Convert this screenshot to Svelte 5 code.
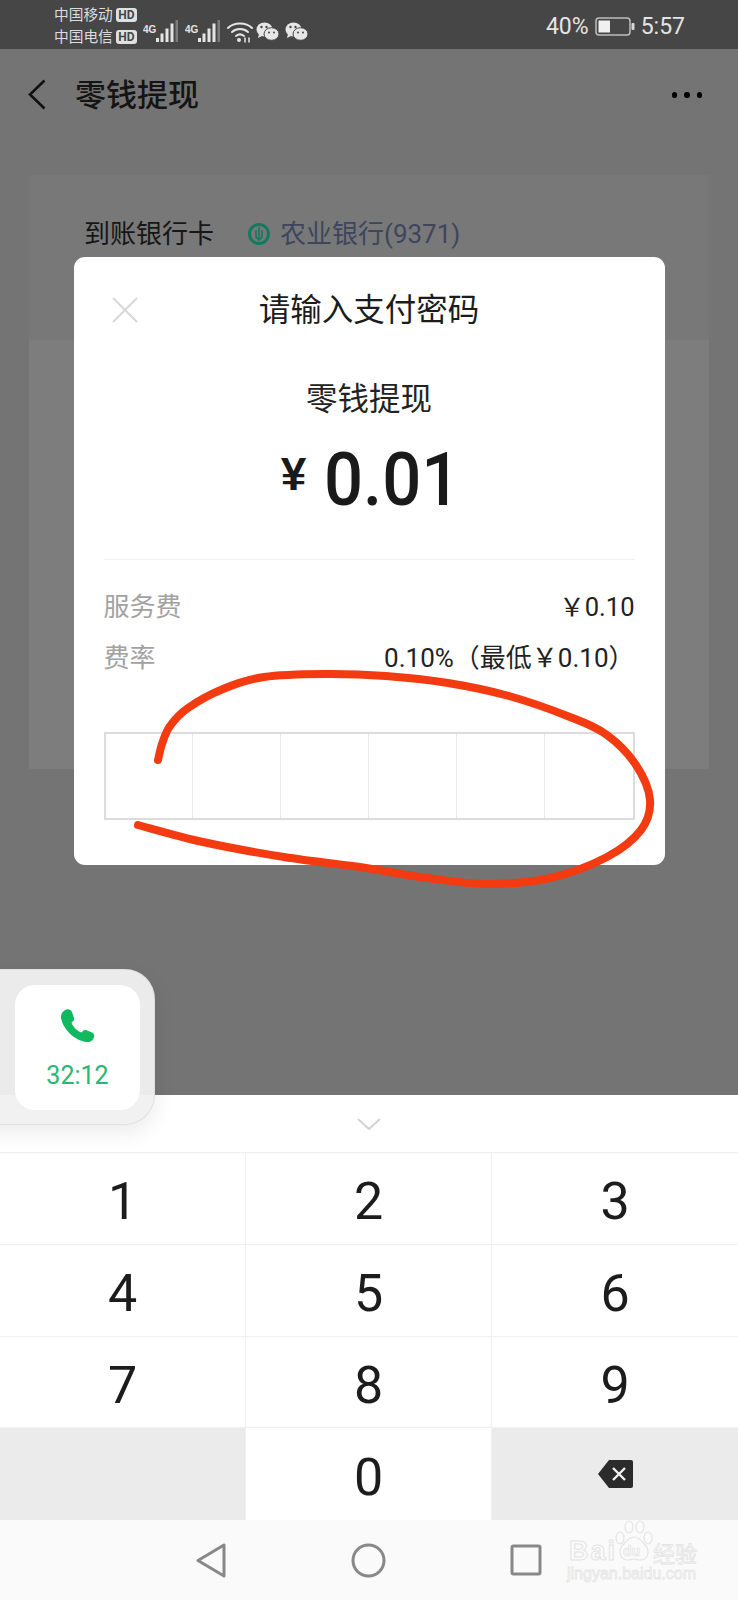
<script>
  const cells = [0, 1, 2, 3, 4, 5]
  const keys = ['1', '2', '3', '4', '5', '6', '7', '8', '9']

  // red marker stroke drawn over the screenshot
  const pts = [
    [158, 760], [162, 744], [170, 726], [188, 708], [223, 689], [264, 677], [325, 674], [386, 676], [448, 683],
    [509, 696], [570, 717], [607, 735], [636, 765], [650, 800], [641, 830], [607, 857], [550, 878],
    [488, 884], [427, 878], [366, 868], [284, 857], [203, 842], [138, 825]
  ]

  function smooth(p) {
    let d = `M${p[0][0]} ${p[0][1]}`
    for (let i = 0; i < p.length - 1; i++) {
      const a = p[i - 1] || p[i]
      const b = p[i]
      const c = p[i + 1]
      const e = p[i + 2] || c
      const c1 = [b[0] + (c[0] - a[0]) / 6, b[1] + (c[1] - a[1]) / 6]
      const c2 = [c[0] - (e[0] - b[0]) / 6, c[1] - (e[1] - b[1]) / 6]
      d += `C${c1[0]} ${c1[1]} ${c2[0]} ${c2[1]} ${c[0]} ${c[1]}`
    }
    return d
  }
  const marker = smooth(pts)
</script>

{#snippet signal()}
  <svg class="signal" width="36" height="24" viewBox="0 0 36 24">
    <text x="0" y="14" class="net">4G</text>
    <rect x="13" y="19" width="3" height="4" fill="#e4e4e4" />
    <rect x="17.5" y="14.5" width="3" height="8.5" fill="#e4e4e4" />
    <rect x="22.5" y="9.5" width="3" height="13.5" fill="#e4e4e4" />
    <rect x="27.5" y="4.500" width="3" height="18.5" fill="#e4e4e4" />
    <rect x="32.500" y="1" width="2.500" height="22" fill="#7c7c7c" />
  </svg>
{/snippet}

{#snippet wechat()}
  <svg width="23" height="19" viewBox="0 0 23 19">
    <ellipse cx="8.500" cy="7.500" rx="8" ry="7" fill="#e6e6e6" />
    <path d="M3 12l-1 4 4-2z" fill="#e6e6e6" />
    <ellipse cx="15.500" cy="12" rx="7.500" ry="6.300" fill="#e6e6e6" stroke="#464646" stroke-width="1" />
    <circle cx="5.500" cy="5" r="1.200" fill="#464646" />
    <circle cx="10.500" cy="5" r="1.200" fill="#464646" />
    <circle cx="13" cy="10.500" r="1" fill="#464646" />
    <circle cx="18" cy="10.500" r="1" fill="#464646" />
  </svg>
{/snippet}

<div class="phone">
  <div class="status">
    <div class="carriers">
      <div class="carrier">中国移动<span class="hd">HD</span></div>
      <div class="carrier">中国电信<span class="hd">HD</span></div>
    </div>
    <div class="status-icons">
      {@render signal()}
      {@render signal()}
      <svg class="wifi" width="26" height="22" viewBox="0 0 26 22" fill="none" stroke="#e6e6e6" stroke-width="2" stroke-linecap="round">
        <path d="M1 7C7 1 19 1 25 7" />
        <path d="M5 11C9.500 7 16.500 7 21 11" />
        <path d="M9 15C11.500 13 14.500 13 17 15" />
        <circle cx="12" cy="19" r="2" fill="#e6e6e6" stroke="none" />
        <path d="M18 17v4M22 17v4" stroke-width="1.500" />
      </svg>
      <span class="chat">{@render wechat()}{@render wechat()}</span>
    </div>
    <div class="status-right">
      <span>40%</span>
      <svg width="40" height="20" viewBox="0 0 40 20">
        <rect x="1" y="1" width="34" height="17" rx="3" fill="none" stroke="#bdbdbd" stroke-width="1.500" />
        <rect x="3.500" y="3.500" width="11.500" height="12" fill="#f0f0f0" />
        <rect x="36.500" y="6" width="3" height="7" rx="1" fill="#d8d8d8" />
      </svg>
      <span>5:57</span>
    </div>
  </div>

  <div class="header">
    <svg class="back" width="18" height="31" viewBox="0 0 18 31" fill="none" stroke="#111" stroke-width="2.600">
      <path d="M16.500 1.500L2 15.500l14.500 14" />
    </svg>
    <div class="page-title">零钱提现</div>
    <div class="dots"><i></i><i></i><i></i></div>
  </div>

  <div class="page">
    <div class="card bank">
      <span class="bank-label">到账银行卡</span>
      <svg class="bank-logo" width="24" height="24" viewBox="0 0 24 24" fill="none" stroke="#137a5e">
        <circle cx="12" cy="12" r="9.500" stroke-width="3" />
        <path d="M12 5v14M9 8v6c0 2 1.500 3 3 3s3-1 3-3V8" stroke-width="1.600" />
      </svg>
      <span class="bank-name">农业银行(9371)</span>
    </div>
    <div class="card amount-card"></div>
  </div>

  <div class="keyboard">
    <div class="handle">
      <svg width="24" height="12" viewBox="0 0 24 12" fill="none" stroke="#d2d2d2" stroke-width="2">
        <path d="M1 1l11 10L23 1" />
      </svg>
    </div>
    <div class="keys">
      {#each keys as k}
        <div class="key">{k}</div>
      {/each}
      <div class="key dim"></div>
      <div class="key">0</div>
      <div class="key dim">
        <svg width="37" height="30" viewBox="0 0 37 30">
          <path d="M12 1h22a2 2 0 0 1 2 2v24a2 2 0 0 1-2 2H12L1 15z" fill="#2b2b2b" />
          <path d="M16 9l12 12M28 9L16 21" stroke="#f2f2f2" stroke-width="2.400" />
        </svg>
      </div>
    </div>
    <div class="nav">
      <svg class="nav-back" width="30" height="35" viewBox="0 0 30 35" fill="none" stroke="#888" stroke-width="3" stroke-linejoin="round">
        <path d="M28 2v31L2 17.500z" />
      </svg>
      <svg class="nav-home" width="35" height="35" viewBox="0 0 35 35" fill="none" stroke="#888" stroke-width="3">
        <circle cx="17.500" cy="17.500" r="15.500" />
      </svg>
      <svg class="nav-recent" width="32" height="32" viewBox="0 0 32 32" fill="none" stroke="#888" stroke-width="3" stroke-linejoin="round">
        <rect x="2" y="2" width="28" height="28" rx="1.500" />
      </svg>
    </div>
  </div>

  <div class="watermark">
    <span class="wm-bai">Bai</span>
    <svg class="wm-paw" width="38" height="42" viewBox="0 0 38 42" fill="none" stroke="#e4e4e4" stroke-width="1.200">
      <ellipse cx="5" cy="18" rx="4" ry="6" />
      <ellipse cx="14" cy="7" rx="4" ry="6" />
      <ellipse cx="25" cy="7" rx="4" ry="6" />
      <ellipse cx="33" cy="18" rx="4" ry="6" />
      <path d="M19 17c6 0 8 5 12 9 4 5 2 14-6 14-3 0-4-1-6-1s-3 1-6 1c-8 0-10-9-6-14 4-4 6-9 12-9z" />
    </svg>
    <span class="wm-du">du</span>
    <span class="wm-cn">经验</span>
    <span class="wm-url">jingyan.baidu.com</span>
  </div>

  <div class="modal">
    <div class="modal-top">
      <svg width="26" height="26" viewBox="0 0 26 26" stroke="#d8d8d8" stroke-width="2">
        <path d="M1 1l24 24M25 1L1 25" />
      </svg>
      <div class="modal-title">请输入支付密码</div>
    </div>
    <div class="modal-sub">零钱提现</div>
    <div class="amount"><span class="yen">¥</span><span class="num">0.01</span></div>
    <div class="divider"></div>
    <div class="row"><span class="row-label">服务费</span><span>￥0.10</span></div>
    <div class="row rate"><span class="row-label">费率</span><span class="rate-val">0.10%（最低￥0.10）</span></div>
    <div class="pwd">
      {#each cells as c}
        <div class="cell"></div>
      {/each}
    </div>
  </div>

  <div class="call">
    <div class="call-inner">
      <svg width="35" height="34" viewBox="0 0 35 34">
        <path d="M5 1C8-.5 11 .5 12 3l2 6c.5 2-1 3.500-2.500 4.500 1.500 4.500 5.500 8.500 10 10 1-1.500 2.500-3 4.500-2.500l6 2.500c2 1 3 3.500 1.500 6-1.500 3-4.500 4-7.500 3.500C14 31 3 20 1 9 .5 6 2 3 5 1z" fill="#10b95f" />
      </svg>
      <div class="call-time">32:12</div>
    </div>
  </div>

  <svg class="marker" width="738" height="1600" viewBox="0 0 738 1600" fill="none">
    <path d={marker} stroke="#f33a10" stroke-width="8" stroke-linecap="round" stroke-linejoin="round" />
  </svg>
</div>

<style>
  :global(body) { margin: 0; }
  .phone {
    position: relative;
    width: 738px;
    height: 1600px;
    overflow: hidden;
    display: flex;
    flex-direction: column;
    background: #747474;
    font-family: Roboto, "Noto Sans CJK SC", sans-serif;
    color: #1a1a1a;
  }

  .status { height: 49px; flex: none; display: flex; align-items: center; background: #464646; color: #dcdcdc; padding: 0 54px; box-sizing: border-box; }
  .carriers { display: flex; flex-direction: column; gap: 2px; width: 89px; flex: none; padding-top: 2px; }
  .carrier { display: flex; align-items: center; gap: 3px; font-size: 14.700px; line-height: 20px; white-space: nowrap; }
  .hd { background: #e0e0e0; color: #464646; border-radius: 3px; font-size: 12px; font-weight: 700; line-height: 14px; padding: 0 2.500px; }
  .status-icons { display: flex; align-items: flex-end; gap: 6px; height: 24px; margin-top: 12px; }
  .net { font: 700 10px "Liberation Sans", sans-serif; fill: #e4e4e4; }
  .wifi { margin-left: 0; }
  .chat { display: flex; gap: 6px; margin-left: -3px; margin-bottom: 2px; }
  .status-right { display: flex; align-items: center; gap: 6px; margin-left: auto; margin-right: -1px; padding-top: 4px; font-size: 23px; color: #e4e4e4; }

  .header { height: 92px; flex: none; display: flex; align-items: center; padding: 0 0 0 28px; }
  .page-title { margin-left: 29px; margin-top: -5px; font-size: 31px; font-weight: 500; color: #141414; }
  .back { flex: none; margin-top: -2px; }
  .dots { margin-left: auto; margin-right: 36px; display: flex; gap: 7px; }
  .dots i { width: 5.500px; height: 5.500px; border-radius: 50%; background: #000; }

  .page { flex: 1; padding: 34px 29px 0; display: flex; flex-direction: column; }
  .card { background: #787878; }
  .bank { height: 165px; box-sizing: border-box; padding: 39px 0 0 55px; display: flex; align-items: flex-start; font-size: 26px; line-height: 40px; }
  .bank-label { color: #161616; width: 163px; flex: none; }
  .bank-logo { margin: 8px 9px 0 0; flex: none; }
  .bank-name { color: #3d465c; }
  .amount-card { height: 429px; background: #7d7d7d; }

  .keyboard { height: 505px; flex: none; background: #fff; display: flex; flex-direction: column; }
  .handle { height: 58px; flex: none; display: flex; align-items: center; justify-content: center; border-bottom: 1px solid #eee; box-sizing: border-box; }
  .keys { display: grid; grid-template-columns: repeat(3, 1fr); grid-template-rows: 92px 92px 91px 92px; height: 367px; flex: none; }
  .key { display: flex; align-items: center; justify-content: center; padding-top: 6px; font-size: 52px; color: #1c1c1c; border-right: 1px solid #f0f0f0; border-bottom: 1px solid #f0f0f0; box-sizing: border-box; }
  .key:nth-child(3n) { border-right: 0; }
  .key:nth-last-child(-n+3) { border-bottom: 0; }
  .key.dim { background: #ebebeb; padding-top: 0; }
  .nav { height: 80px; flex: none; background: #fafafa; display: flex; align-items: center; box-sizing: border-box; padding-left: 196px; }
  .nav-home { margin-left: 125px; }
  .nav-recent { margin-left: 124px; }

  .watermark { position: absolute; left: 566px; top: 1520px; width: 136px; height: 62px; color: transparent; font-family: "Liberation Sans", sans-serif; font-weight: 700; -webkit-text-stroke: 1px #e4e4e4; white-space: nowrap; }
  .wm-bai { position: absolute; left: 3px; top: 18px; font-size: 27px; line-height: 26px; letter-spacing: 2px; }
  .wm-paw { position: absolute; left: 49px; top: 0; }
  .wm-du { position: absolute; left: 57px; top: 24px; font-size: 14px; line-height: 14px; -webkit-text-stroke: 0.700px #e4e4e4; }
  .wm-cn { position: absolute; left: 87px; top: 20px; font-size: 22px; line-height: 24px; font-family: "Noto Sans CJK SC", sans-serif; font-weight: 400; -webkit-text-stroke: 0.800px #e4e4e4; }
  .wm-url { position: absolute; left: 1px; top: 46px; font-size: 16px; line-height: 16px; font-weight: 400; -webkit-text-stroke: 0.800px #e6e6e6; }

  .modal { position: absolute; left: 73.500px; top: 257px; width: 591px; height: 608px; box-sizing: border-box; padding: 0 30px; background: #fff; border-radius: 11px; display: flex; flex-direction: column; }
  .modal-top { position: relative; height: 100px; display: flex; align-items: center; justify-content: center; flex: none; }
  .modal-top svg { position: absolute; left: 8px; top: 40px; }
  .modal-title { font-size: 31.500px; color: #1c1c1c; }
  .modal-sub { font-size: 31.500px; line-height: 44px; text-align: center; margin-top: 21px; color: #222; }
  .amount { height: 90px; margin-top: 13px; display: flex; align-items: center; justify-content: center; gap: 18px; color: #1a1a1a; }
  .yen { font-size: 46px; font-weight: 700; line-height: 44px; margin-top: -12px; font-family: "Liberation Sans", sans-serif; }
  .num { font-size: 74px; font-weight: 500; line-height: 90px; transform: scaleX(0.93); transform-origin: left center; margin-right: -14px; }
  .divider { height: 1px; background: #f0f0f0; margin-top: 34px; flex: none; }
  .row { display: flex; justify-content: space-between; align-items: center; font-size: 25.500px; line-height: 40px; margin-top: 27px; color: #222; }
  .row.rate { margin-top: 11px; }
  .rate-val { font-size: 26px; white-space: nowrap; }
  .row-label { color: #a2a2a2; font-size: 26px; }
  .pwd { display: grid; grid-template-columns: repeat(6, 1fr); height: 88px; box-sizing: border-box; border: 2px solid #dcdcdc; margin-top: 54px; flex: none; }
  .cell { border-right: 1px solid #e9e9e9; }
  .cell:last-child { border-right: 0; }

  .call { position: absolute; left: -60px; top: 969px; width: 215px; height: 156px; box-sizing: border-box; padding: 15px 14px 14px 74px; background: rgba(240, 240, 240, 0.96); border: 1px solid rgba(220, 220, 220, 0.8); border-radius: 30px; box-shadow: 0 8px 22px rgba(0, 0, 0, 0.08); display: flex; }
  .call-inner { flex: 1; background: #fff; border-radius: 20px; display: flex; flex-direction: column; align-items: center; padding-top: 24px; box-sizing: border-box; }
  .call-time { font-size: 25px; line-height: 30px; color: #2ab673; margin-top: 18px; }

  .marker { position: absolute; left: 0; top: 0; pointer-events: none; }
</style>
